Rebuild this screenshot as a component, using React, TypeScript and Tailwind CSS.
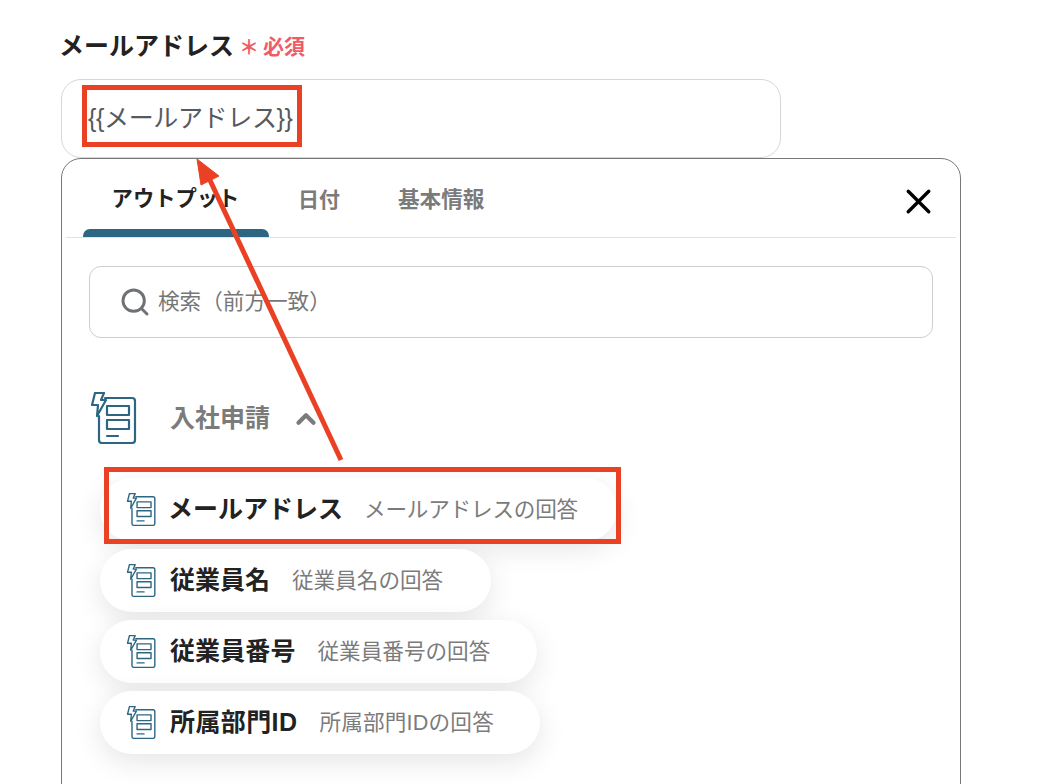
import React from 'react';
import { X, Search, ChevronUp } from 'lucide-react';

const ROWS = [
  { name: 'メールアドレス', desc: 'メールアドレスの回答', width: 'w-[517px]', nameClass: 'ml-[11px]', descClass: 'ml-[21px] tracking-[-0.2px]' },
  { name: '従業員名', desc: '従業員名の回答', width: 'w-[391px]', nameClass: 'ml-[13px]', descClass: 'ml-[22px]' },
  { name: '従業員番号', desc: '従業員番号の回答', width: 'w-[437px]', nameClass: 'ml-[13px] tracking-[0.1px]', descClass: 'ml-[22px]' },
  { name: '所属部門ID', desc: '所属部門IDの回答', width: 'w-[440px]', nameClass: 'ml-[13px] tracking-[0.4px]', descClass: 'ml-[22px] tracking-[0.2px]' },
];

function FormIcon({ className }: { className: string }) {
  return (
    <svg viewBox="0 0 46 52" fill="none" stroke="#2c6682" strokeWidth="2.2" strokeLinejoin="round" strokeLinecap="round" className={className}>
      <path d="M14 6 H41 Q44 6 44 9 V48 Q44 51 41 51 H11 Q8 51 8 48 V24" />
      <rect x="16" y="14" width="22" height="9" />
      <rect x="16" y="28" width="22" height="9" />
      <path d="M16 44 H27" />
      <path d="M4 1 H13 L10 8 H15 L6 24 L7 13 H1 Z" fill="#fff" />
    </svg>
  );
}

export default function App() {
  return (
    <div className="relative w-[1052px] h-[784px] overflow-hidden bg-white pl-[61px] pt-[29px] font-['Liberation_Sans','Noto_Sans_CJK_JP',sans-serif]">
      <div className="flex items-center h-[35px]">
        <span className="-ml-[2px] text-[25px] font-bold text-[#222]">メールアドレス</span>
        <span className="ml-[5px] text-[#ef5b66] text-[20px] font-bold w-[20px] text-center mt-[3px]">＊</span>
        <span className="ml-[4px] text-[#ef5b66] text-[21px] font-bold">必須</span>
      </div>

      <div className="mt-[15px] w-[720px] h-[79px] rounded-[20px] border border-[#d5d7da] flex items-center pl-[26px]">
        <span className="text-[25px] text-[#555a60] tracking-[-0.35px]">{'{{メールアドレス}}'}</span>
      </div>

      <div className="w-[900px] h-[700px] rounded-[20px] border border-[#77777a] bg-white">
        <div className="relative mx-[4px] h-[79px] border-b border-[#e2e2e2] flex items-start">
          <div className="ml-[17px] w-[186px] h-[78px] relative flex justify-center pt-[25px]">
            <span className="-ml-[1px] text-[21.3px] font-bold text-[#222]">アウトプット</span>
            <div className="absolute left-0 right-0 bottom-0 h-[8px] bg-[#2c6682] rounded-t-[7px]" />
          </div>
          <span className="ml-[29px] mt-[25px] text-[21px] font-bold text-[#7b7b7b]">日付</span>
          <span className="ml-[58px] mt-[25px] text-[21.6px] font-bold text-[#7b7b7b]">基本情報</span>
          <X className="absolute left-[832px] top-[22px] w-[41px] h-[41px] text-black" strokeWidth={2} />
        </div>

        <div className="mt-[28px] ml-[27px] w-[844px] h-[72px] rounded-[12px] border border-[#ccced1] flex items-center pl-[29px]">
          <Search className="w-[32px] h-[32px] text-[#6f7275]" strokeWidth={2.2} />
          <span className="ml-[7px] mt-[1px] text-[21.6px] text-[#777]">検索（前方一致）</span>
        </div>

        <div className="mt-[53px] ml-[29px] flex items-center h-[54px]">
          <FormIcon className="w-[46px] h-[52px]" />
          <span className="ml-[33px] mt-[2px] text-[25px] font-bold text-[#7b7b7b]">入社申請</span>
          <ChevronUp className="ml-[21px] mt-[2px] w-[30px] h-[30px] text-[#7b7b7b]" strokeWidth={3.4} />
        </div>

        <div className="mt-[33px] ml-[38px] flex flex-col gap-[8px]">
          {ROWS.map(row => (
            <div key={row.name} className={`${row.width} h-[63px] rounded-full bg-white shadow-[0_8px_28px_rgba(0,0,0,0.10)] flex items-center pl-[26px]`}>
              <FormIcon className="w-[31px] h-[33px] shrink-0" />
              <span className={`${row.nameClass} mt-[1px] text-[25px] font-bold text-[#222] whitespace-nowrap`}>{row.name}</span>
              <span className={`${row.descClass} mt-[1px] text-[21.6px] text-[#7b7b7b] whitespace-nowrap`}>{row.desc}</span>
            </div>
          ))}
        </div>
      </div>

      {/* annotations */}
      <div className="absolute left-[82px] top-[85px] w-[220px] h-[62px] border-[5px] border-[#ea4125]" />
      <div className="absolute left-[104px] top-[467px] w-[517px] h-[77px] border-[5px] border-[#ea4125]" />
      <svg className="absolute left-0 top-0 pointer-events-none" width="1052" height="784" fill="none">
        <path d="M341 460 L208 176" stroke="#ea4125" strokeWidth="5" />
        <path d="M197 159 L219 176 L201 185 Z" fill="#ea4125" stroke="#ea4125" strokeWidth="1" />
      </svg>
    </div>
  );
}
